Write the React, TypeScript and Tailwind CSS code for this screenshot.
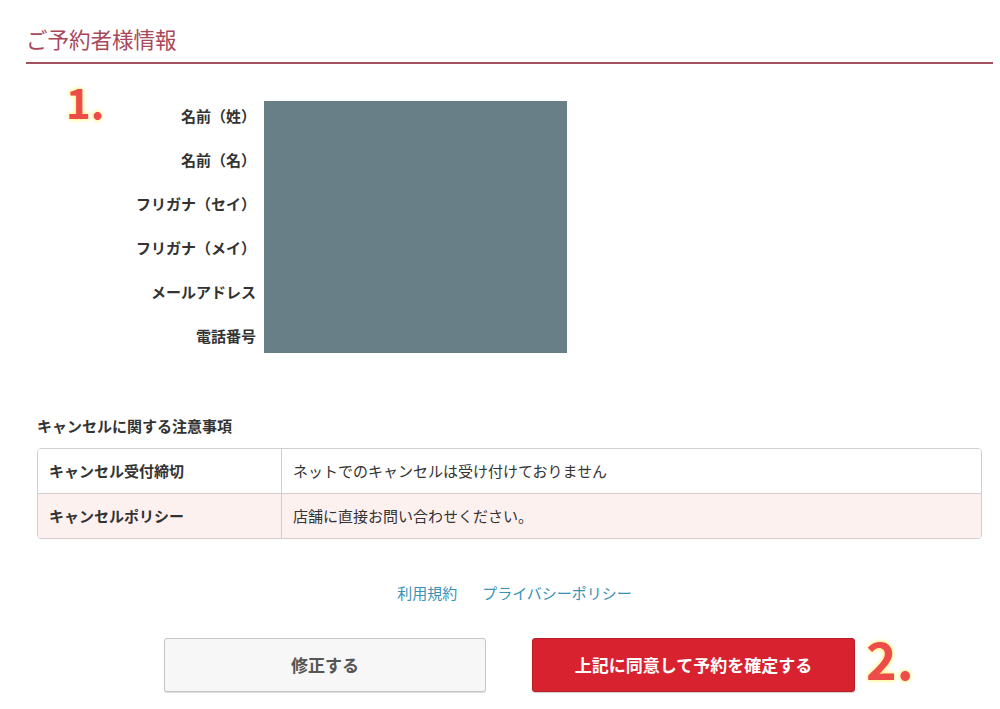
import React from "react";

const labels = ["名前（姓）", "名前（名）", "フリガナ（セイ）", "フリガナ（メイ）", "メールアドレス", "電話番号"];

export default function App() {
  return (
    <div
      className="w-[1000px] h-[709px] bg-white overflow-hidden"
      style={{ fontFamily: '"Noto Sans CJK JP", "Noto Sans", sans-serif' }}
    >
      <div className="relative ml-[26px] w-[967px] pt-[24px]">
        <h2 className="text-[21.5px] leading-[30px] text-[#a8485a] font-normal">ご予約者様情報</h2>
        <div className="mt-[8px] h-[2px] bg-[#a3525f]" />

        {/* annotation 1 */}
        <div className="absolute left-[40px] top-[77px] text-[42px] leading-[48px] font-bold text-[#ee4b4b] [text-shadow:0_0_3px_#fff27a,0_0_5px_#fff27a]">
          1.
        </div>

        <div className="mt-[30px] flex">
          <div className="w-[230px] flex flex-col items-end">
            {labels.map((l) => (
              <div key={l} className="h-[44px] flex items-center text-[15px] font-bold text-[#333]">
                {l}
              </div>
            ))}
          </div>
          <div className="ml-[8px] mt-[7px] w-[303px] h-[252px] bg-[#687f88]" />
        </div>

        <div className="mt-[58px] ml-[11px] mr-[11px]">
          <div className="text-[15px] font-bold text-[#333] leading-[20px]">キャンセルに関する注意事項</div>
          <div className="mt-[12px] border border-[#cfcfcf] rounded-[4px] overflow-hidden text-[15px] text-[#333]">
            <div className="flex h-[45px] bg-white border-b border-[#cfcfcf]">
              <div className="w-[244px] border-r border-[#cfcfcf] flex items-center pl-[11px] font-bold">キャンセル受付締切</div>
              <div className="flex-1 flex items-center pl-[11px]">ネットでのキャンセルは受け付けておりません</div>
            </div>
            <div className="flex h-[44px] bg-[#fdf1f0]">
              <div className="w-[244px] border-r border-[#cfcfcf] flex items-center pl-[11px] font-bold">キャンセルポリシー</div>
              <div className="flex-1 flex items-center pl-[11px]">店舗に直接お問い合わせください。</div>
            </div>
          </div>
        </div>

        <div className="mt-[44px] flex justify-center gap-[25px] pl-[10px] text-[15px] leading-[20px] text-[#3a92b4]">
          <span>利用規約</span>
          <span>プライバシーポリシー</span>
        </div>

        <div className="mt-[35px] flex justify-center gap-[46px]">
          <button className="w-[322px] h-[54px] bg-[#f7f7f7] border border-[#c6c6c6] rounded-[3px] text-[17px] font-bold text-[#555] shadow-[0_1px_1px_rgba(0,0,0,0.15)]">
            修正する
          </button>
          <div className="relative">
            <button className="w-[323px] h-[54px] bg-[#d8222f] border border-[#b81d28] rounded-[3px] text-[17px] font-bold text-white shadow-[0_1px_1px_rgba(0,0,0,0.2)]">
              上記に同意して予約を確定する
            </button>
            <div className="absolute left-[334px] top-[-10px] text-[52px] leading-[60px] font-bold text-[#ee4b4b] [text-shadow:0_0_3px_#fff27a,0_0_5px_#fff27a]">
              2.
            </div>
          </div>
        </div>
      </div>
    </div>
  );
}
